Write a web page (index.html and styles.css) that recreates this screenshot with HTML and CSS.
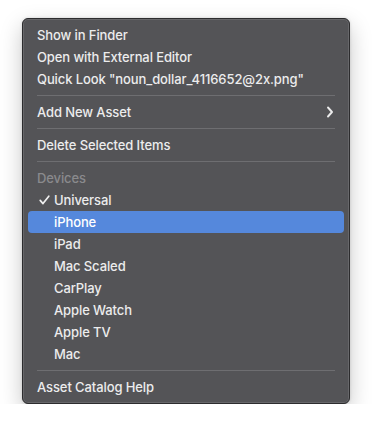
FILE: index.html
```
<!DOCTYPE html>
<html lang="en">
<head>
  <meta charset="UTF-8" />
  <title>Asset menu</title>
  <link rel="stylesheet" href="styles.css">
</head>
<body>
  <div class="menu">
    <div class="item">Show in Finder</div>
    <div class="item">Open with External Editor</div>
    <div class="item">Quick Look "noun_dollar_4116652@2x.png"</div>
    <div class="sep"></div>
    <div class="item submenu">
      <span>Add New Asset</span>
      <svg class="chevron" width="8" height="12" viewBox="0 0 8 12">
        <path d="M2 1.5 L6 6 L2 10.5" fill="none" stroke="#ececec" stroke-width="1.9" stroke-linecap="round" stroke-linejoin="round"/>
      </svg>
    </div>
    <div class="sep"></div>
    <div class="item">Delete Selected Items</div>
    <div class="sep"></div>
    <div class="item header">Devices</div>
    <div class="item indent">
      <svg class="check" width="11" height="10" viewBox="0 0 11 10">
        <path d="M1.2 5.4 L4 8.6 L9.8 1.2" fill="none" stroke="#f0f0f0" stroke-width="1.7" stroke-linecap="round" stroke-linejoin="round"/>
      </svg>
      Universal
    </div>
    <div class="item indent selected">iPhone</div>
    <div class="item indent">iPad</div>
    <div class="item indent">Mac Scaled</div>
    <div class="item indent">CarPlay</div>
    <div class="item indent">Apple Watch</div>
    <div class="item indent">Apple TV</div>
    <div class="item indent">Mac</div>
    <div class="sep"></div>
    <div class="item">Asset Catalog Help</div>
  </div>
</body>
</html>
```
FILE: styles.css
```
:root {
  --menu-bg: #545457;
  --text: #ececed;
  --muted: #8a8a8d;
  --line: #6e6e71;
  --accent: #5588dc;
}

body {
  margin: 0;
  background: #ffffff;
  font-family: Inter, "Liberation Sans", sans-serif;
  font-size: 13px;
  font-weight: 500;
  letter-spacing: -0.1px;
}

.menu {
  margin: 18px 0 0 22px;
  width: 326px;
  padding: 5px 0;
  background: var(--menu-bg);
  border: 1px solid #2c2c2e;
  border-radius: 6px;
  box-shadow: inset 0 0 0 1px #67676a, 0 8px 22px rgba(0, 0, 0, 0.22), 0 0 3px rgba(0, 0, 0, 0.15);
  color: var(--text);
}

.item {
  position: relative;
  height: 22px;
  line-height: 22px;
  margin: 0 5px;
  padding-left: 9px;
  border-radius: 4px;
  white-space: nowrap;
}

.indent {
  padding-left: 26px;
}

.header {
  color: var(--muted);
}

.selected {
  background: var(--accent);
  color: #ffffff;
}

.check {
  position: absolute;
  left: 11px;
  top: 6px;
}

.submenu {
  display: flex;
  justify-content: space-between;
  align-items: center;
  padding-right: 10px;
}

.sep {
  height: 1px;
  margin: 5px 14px;
  background: var(--line);
}
```
